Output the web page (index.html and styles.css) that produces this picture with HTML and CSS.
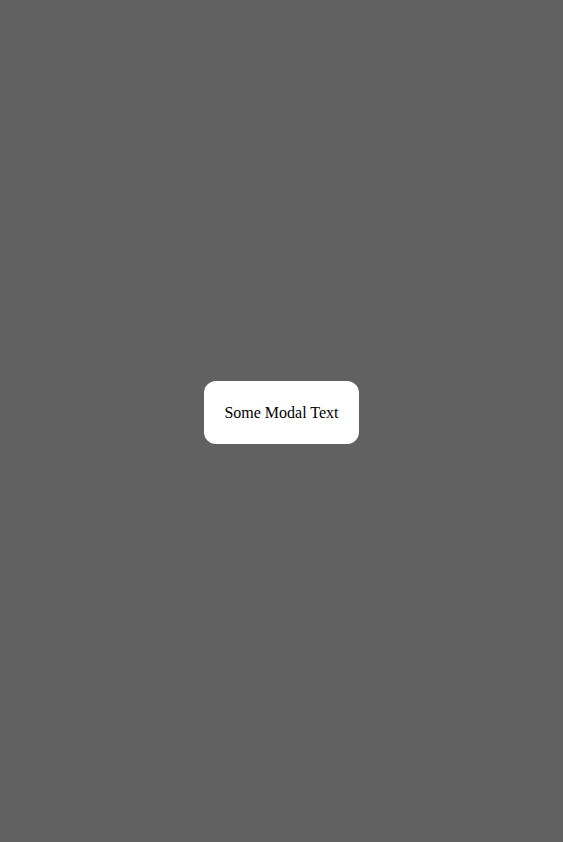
FILE: index.html
```html
<!DOCTYPE html>
<html>
<head>
<meta charset="utf-8">
<link rel="stylesheet" href="styles.css">
</head>
<body>
<div class="overlay">
  <div class="modal">Some Modal Text</div>
</div>
</body>
</html>
```

FILE: styles.css
```css
html, body {
  margin: 0;
  height: 100%;
}
body {
  font-family: "Liberation Serif", "Times New Roman", serif;
  font-size: 16px;
  background: #616161;
}
.overlay {
  box-sizing: border-box;
  height: 100%;
  padding-bottom: 17px;
  display: flex;
  align-items: center;
  justify-content: center;
}
.modal {
  background: #ffffff;
  color: #000000;
  border-radius: 12px;
  padding: 23px 20px 22px;
  line-height: normal;
}
```
